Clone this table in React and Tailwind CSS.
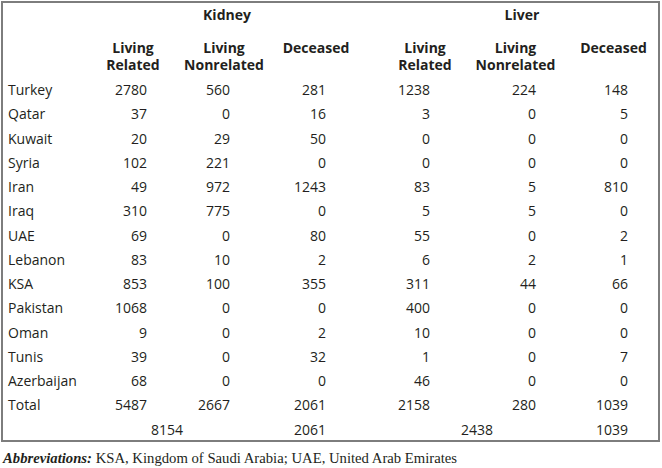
import React from "react";

const rows = [
  ["Turkey", "2780", "560", "281", "1238", "224", "148"],
  ["Qatar", "37", "0", "16", "3", "0", "5"],
  ["Kuwait", "20", "29", "50", "0", "0", "0"],
  ["Syria", "102", "221", "0", "0", "0", "0"],
  ["Iran", "49", "972", "1243", "83", "5", "810"],
  ["Iraq", "310", "775", "0", "5", "5", "0"],
  ["UAE", "69", "0", "80", "55", "0", "2"],
  ["Lebanon", "83", "10", "2", "6", "2", "1"],
  ["KSA", "853", "100", "355", "311", "44", "66"],
  ["Pakistan", "1068", "0", "0", "400", "0", "0"],
  ["Oman", "9", "0", "2", "10", "0", "0"],
  ["Tunis", "39", "0", "32", "1", "0", "7"],
  ["Azerbaijan", "68", "0", "0", "46", "0", "0"],
  ["Total", "5487", "2667", "2061", "2158", "280", "1039"],
];

const numPad = ["pr-[32px]", "pr-[41px]", "pr-[44px]", "pr-[40px]", "pr-[29px]", "pr-[30px]"];

const grid = "grid grid-cols-[84px_92px_92px_99px_100px_95px_93px]";

export default function App() {
  return (
    <div
      className="w-[662px] h-[468px] bg-white pt-[1px] pl-[1px] text-[#231f20]"
      style={{ fontFamily: '"Open Sans", sans-serif' }}
    >
      <div className="w-[659px] border-2 border-[#7d7d7d] text-[14px]">
        <div className={`${grid} h-[35.6px] leading-[24px] font-bold`}>
          <div />
          <div className="col-span-3 flex justify-center pr-[3px]">Kidney</div>
          <div className="col-span-3 flex justify-center pl-[16px]">Liver</div>
        </div>
        <div className={`${grid} h-[39.5px] leading-[17.3px] font-bold`}>
          <div />
          <div className="flex justify-center">
            <div className="text-center whitespace-nowrap">Living<br />Related</div>
          </div>
          <div className="flex justify-center pr-[2px]">
            <div className="text-center whitespace-nowrap">Living<br />Nonrelated</div>
          </div>
          <div className="flex justify-center pr-[9px]">
            <div className="text-center whitespace-nowrap">Deceased</div>
          </div>
          <div className="flex justify-center pl-[10px]">
            <div className="text-center whitespace-nowrap">Living<br />Related</div>
          </div>
          <div className="flex justify-center pr-[4px]">
            <div className="text-center whitespace-nowrap">Living<br />Nonrelated</div>
          </div>
          <div className="flex justify-center pl-[4px]">
            <div className="text-center whitespace-nowrap">Deceased</div>
          </div>
        </div>
        {rows.map((r) => (
          <div key={r[0]} className={`${grid} h-[24.25px] leading-[24.25px]`}>
            <div className="pl-[5px] whitespace-nowrap">{r[0]}</div>
            {r.slice(1).map((v, i) => (
              <div key={i} className={`text-right ${numPad[i]}`}>{v}</div>
            ))}
          </div>
        ))}
        <div className={`${grid} h-[22.5px] leading-[24.25px]`}>
          <div />
          <div className="col-span-2 flex justify-center pr-[24px]">8154</div>
          <div className="text-right pr-[44px]">2061</div>
          <div className="col-span-2 flex justify-center pl-[19px]">2438</div>
          <div className="text-right pr-[30px]">1039</div>
        </div>
      </div>
      <div
        className="mt-[6px] pl-[2px] text-[14.7px] leading-[20px] text-[#231f20] whitespace-nowrap"
        style={{ fontFamily: '"Liberation Serif", serif' }}
      >
        <span className="font-bold italic">Abbreviations:</span> KSA, Kingdom of Saudi Arabia; UAE, United Arab Emirates
      </div>
    </div>
  );
}
